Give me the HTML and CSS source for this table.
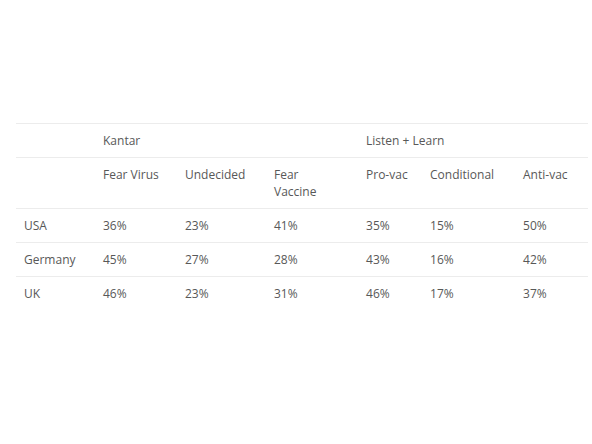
FILE: index.html
```html
<!DOCTYPE html>
<html>
<head>
<meta charset="utf-8">
<link rel="stylesheet" href="styles.css">
</head>
<body>
<div class="wrap">
<table class="data">
  <colgroup>
    <col class="c1"><col class="c2"><col class="c3"><col class="c4"><col class="c5"><col class="c6"><col class="c7">
  </colgroup>
  <thead>
    <tr class="group">
      <th></th>
      <th colspan="3">Kantar</th>
      <th colspan="3">Listen + Learn</th>
    </tr>
    <tr class="head">
      <th></th>
      <th>Fear Virus</th>
      <th>Undecided</th>
      <th>Fear<br>Vaccine</th>
      <th>Pro-vac</th>
      <th>Conditional</th>
      <th>Anti-vac</th>
    </tr>
  </thead>
  <tbody>
    <tr><td>USA</td><td>36%</td><td>23%</td><td>41%</td><td>35%</td><td>15%</td><td>50%</td></tr>
    <tr><td>Germany</td><td>45%</td><td>27%</td><td>28%</td><td>43%</td><td>16%</td><td>42%</td></tr>
    <tr class="last"><td>UK</td><td>46%</td><td>23%</td><td>31%</td><td>46%</td><td>17%</td><td>37%</td></tr>
  </tbody>
</table>
</div>
</body>
</html>
```
FILE: styles.css
```css
html, body {
  margin: 0;
  padding: 0;
  background: #ffffff;
}
.wrap {
  padding: 123px 4px 0 16px;
}
.data {
  width: 572px;
  table-layout: fixed;
  border-collapse: collapse;
  font-family: "Open Sans", "Liberation Sans", sans-serif;
  font-size: 12px;
  color: #585858;
}
.c1 { width: 79px; }
.c2 { width: 82px; }
.c3 { width: 89px; }
.c4 { width: 92px; }
.c5 { width: 64px; }
.c6 { width: 93px; }
.c7 { width: 73px; }
.data th, .data td {
  text-align: left;
  font-weight: 400;
  vertical-align: top;
  padding: 8px 8px;
  line-height: 17px;
  border-top: 1px solid #ececec;
}
.data tr.last td {
  border-bottom: none;
}
```
